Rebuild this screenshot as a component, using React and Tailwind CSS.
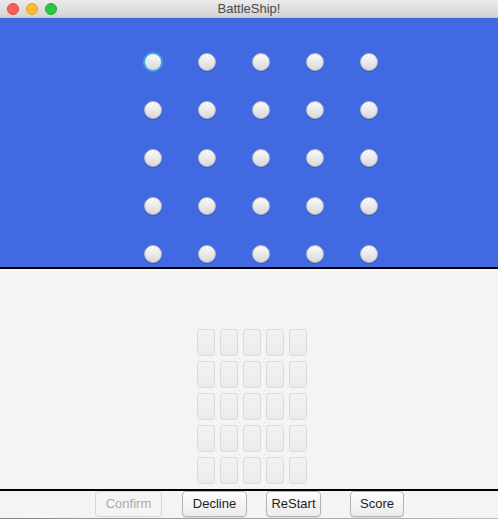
import React from "react";

const font = { fontFamily: '"Liberation Sans", Arial, sans-serif' };

function Radio({ focused }) {
  return (
    <div
      className={
        "w-[18px] h-[18px] rounded-full bg-gradient-to-b from-[#fafafa] to-[#d9d9d9] " +
        (focused
          ? "border-[1.5px] border-[#2fb6e0] shadow-[0_0_1px_1px_rgba(80,200,240,0.6)]"
          : "border border-[#b9b9c4] shadow-[0_1px_0_rgba(0,0,0,0.18)]")
      }
    />
  );
}

function Card() {
  return (
    <div className="w-[18px] h-[27px] rounded-[3px] border border-[#dadada] bg-gradient-to-b from-[#f2f2f2] to-[#ebebeb]" />
  );
}

function Btn({ children, w, disabled, className = "" }) {
  return (
    <div
      className={
        "h-[26px] flex items-center justify-center rounded-[4px] text-[13px] " +
        (disabled
          ? "border border-[#d6d6d6] bg-[#f4f4f4] text-[#aaaaaa] "
          : "border border-[#b3b3b3] bg-gradient-to-b from-[#fdfdfd] to-[#ececec] text-[#1e1e1e] shadow-[0_1px_0_rgba(0,0,0,0.08)] ") +
        className
      }
      style={{ width: w }}
    >
      {children}
    </div>
  );
}

export default function App() {
  const cells = Array.from({ length: 25 });
  return (
    <div className="w-[498px] h-[519px] flex flex-col bg-[#f4f4f4] overflow-hidden" style={font}>
      <div className="relative h-[18px] bg-gradient-to-b from-[#ebebeb] to-[#d4d4d4] flex items-center pl-[7px] gap-[7px] border-b border-[#c4c4c4]">
        <div className="w-[12px] h-[12px] rounded-full bg-[#fc5f57] border border-[#e2463f]" />
        <div className="w-[12px] h-[12px] rounded-full bg-[#fdbc2e] border border-[#e0a028]" />
        <div className="w-[12px] h-[12px] rounded-full bg-[#28c840] border border-[#1eab2e]" />
        <div className="absolute inset-0 flex items-center justify-center text-[13px] text-[#4a4a4a]">
          BattleShip!
        </div>
      </div>
      <div className="h-[249px] bg-[#4169e1] pt-[35px] pl-[144px]">
        <div className="grid grid-cols-[repeat(5,18px)] gap-x-[36px] gap-y-[30px]">
          {cells.map((_, i) => (
            <Radio key={i} focused={i === 0} />
          ))}
        </div>
      </div>
      <div className="h-[2px] bg-black" />
      <div className="h-[220px] pt-[60px] pl-[197px]">
        <div className="grid grid-cols-[repeat(5,18px)] gap-x-[5px] gap-y-[5px]">
          {cells.map((_, i) => (
            <Card key={i} />
          ))}
        </div>
      </div>
      <div className="h-[2px] bg-black" />
      <div className="h-[27px] flex items-start pl-[95px] pt-[0px]">
        <Btn w={67} disabled>Confirm</Btn>
        <Btn w={65} className="ml-[20px]">Decline</Btn>
        <Btn w={55} className="ml-[19px]">ReStart</Btn>
        <Btn w={54} className="ml-[29px]">Score</Btn>
      </div>
      <div className="h-[1px] bg-gradient-to-r from-[#8a8a8a] to-[#bdbdbd]" />
    </div>
  );
}
